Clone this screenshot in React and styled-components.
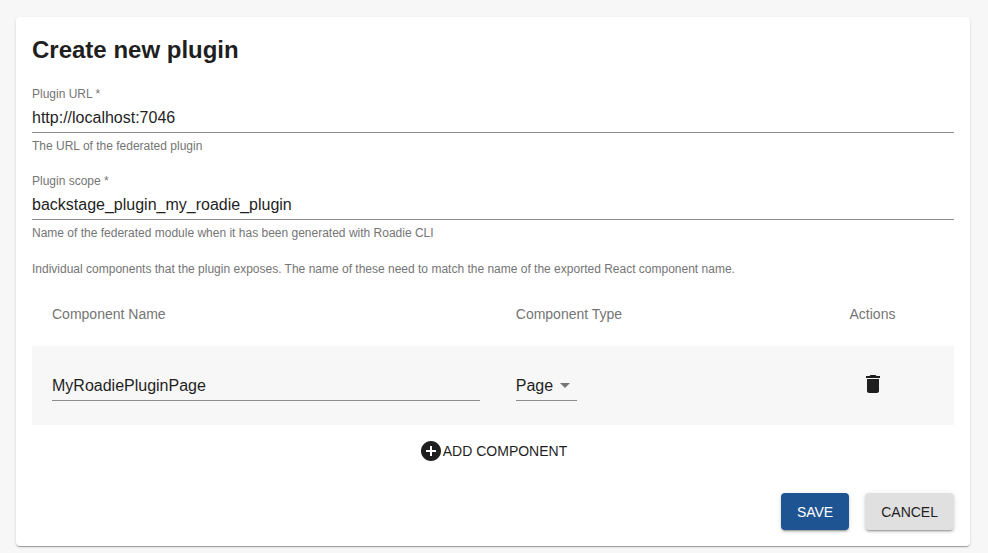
import React, { useState } from "react";
import styled, { createGlobalStyle } from "styled-components";

const PluginForm = () => {
    const [url, setUrl] = useState("http://localhost:7046");
    const [scope, setScope] = useState("backstage_plugin_my_roadie_plugin");
    const [components, setComponents] = useState([
        { id: 1, name: "MyRoadiePluginPage", type: "Page" },
    ]);

    const updateComponent = (id, values) => {
        setComponents(components.map((c) => (c.id === id ? { ...c, ...values } : c)));
    };

    const removeComponent = (id) => {
        setComponents(components.filter((c) => c.id !== id));
    };

    const addComponent = () => {
        setComponents([...components, { id: Date.now(), name: "", type: "Page" }]);
    };

    return (
        <StyledCard onSubmit={(e) => e.preventDefault()}>
            <StyledTitle>Create new plugin</StyledTitle>
            <StyledFields>
                <StyledField>
                    <StyledLabel htmlFor="plugin-url">Plugin URL *</StyledLabel>
                    <StyledInput id="plugin-url" value={url} onChange={(e) => setUrl(e.target.value)} />
                    <StyledHelper>The URL of the federated plugin</StyledHelper>
                </StyledField>
                <StyledField>
                    <StyledLabel htmlFor="plugin-scope">Plugin scope *</StyledLabel>
                    <StyledInput id="plugin-scope" value={scope} onChange={(e) => setScope(e.target.value)} />
                    <StyledHelper>Name of the federated module when it has been generated with Roadie CLI</StyledHelper>
                </StyledField>
            </StyledFields>
            <StyledDescription>
                Individual components that the plugin exposes. The name of these need to match the name of the exported React component name.
            </StyledDescription>
            <StyledTable>
                <thead>
                    <tr>
                        <StyledHeadCell $width="50.3%">Component Name</StyledHeadCell>
                        <StyledHeadCell $width="36.2%">Component Type</StyledHeadCell>
                        <StyledHeadCell $width="13.5%">Actions</StyledHeadCell>
                    </tr>
                </thead>
                <tbody>
                    {components.map((c) => (
                        <StyledRow key={c.id}>
                            <StyledCell>
                                <StyledInput
                                    aria-label="Component Name"
                                    value={c.name}
                                    onChange={(e) => updateComponent(c.id, { name: e.target.value })}
                                />
                            </StyledCell>
                            <StyledCell>
                                <StyledSelectWrapper>
                                    <StyledSelect
                                        aria-label="Component Type"
                                        value={c.type}
                                        onChange={(e) => updateComponent(c.id, { type: e.target.value })}
                                    >
                                        <option>Page</option>
                                        <option>Card</option>
                                    </StyledSelect>
                                    <StyledArrow viewBox="0 0 24 24">
                                        <path d="M7 10l5 5 5-5z" />
                                    </StyledArrow>
                                </StyledSelectWrapper>
                            </StyledCell>
                            <StyledCell>
                                <StyledIconButton type="button" aria-label="Delete" onClick={() => removeComponent(c.id)}>
                                    <StyledIcon viewBox="0 0 24 24">
                                        <path d="M6 19c0 1.1.9 2 2 2h8c1.1 0 2-.9 2-2V7H6v12zM19 4h-3.5l-1-1h-5l-1 1H5v2h14V4z" />
                                    </StyledIcon>
                                </StyledIconButton>
                            </StyledCell>
                        </StyledRow>
                    ))}
                </tbody>
            </StyledTable>
            <StyledAddButton type="button" onClick={addComponent}>
                <StyledIcon viewBox="0 0 24 24">
                    <path d="M12 2C6.48 2 2 6.48 2 12s4.48 10 10 10 10-4.48 10-10S17.52 2 12 2zm5 11h-4v4h-2v-4H7v-2h4V7h2v4h4v2z" />
                </StyledIcon>
                ADD COMPONENT
            </StyledAddButton>
            <StyledFooter>
                <StyledButton type="submit" $primary>SAVE</StyledButton>
                <StyledButton type="button">CANCEL</StyledButton>
            </StyledFooter>
        </StyledCard>
    );
};

const App = () => (
    <>
        <GlobalStyle />
        <StyledPage>
            <PluginForm />
        </StyledPage>
    </>
);

const GlobalStyle = createGlobalStyle`
  * {
    box-sizing: border-box;
  }
  body {
    margin: 0;
    background: #f7f7f7;
    color: #1f1f1f;
    font-family: "Liberation Sans", Arial, sans-serif;
  }
  input, select, button {
    margin: 0;
    color: inherit;
    font-family: inherit;
  }
`;

const StyledPage = styled.main`
  padding: 17px 18px 6px 16px;
`;

const StyledCard = styled.form`
  display: flex;
  flex-direction: column;
  padding: 16px;
  background: #fff;
  border-radius: 4px;
  box-shadow: 0 2px 1px -1px rgba(0, 0, 0, 0.2), 0 1px 1px rgba(0, 0, 0, 0.14), 0 1px 3px rgba(0, 0, 0, 0.12);
`;

const StyledTitle = styled.h1`
  margin: 0 0 19px;
  font-size: 24px;
  line-height: 34px;
`;

const StyledFields = styled.div`
  display: flex;
  flex-direction: column;
  gap: 17px;
`;

const StyledField = styled.div`
  display: flex;
  flex-direction: column;
`;

const StyledLabel = styled.label`
  color: #757575;
  font-size: 12px;
  line-height: 16px;
`;

const StyledInput = styled.input`
  display: block;
  width: 100%;
  height: 31px;
  padding: 2px 0 0;
  border: 0;
  border-bottom: 1px solid #8c8c8c;
  border-radius: 0;
  background: transparent;
  font-size: 16px;
  outline: none;
`;

const StyledHelper = styled.p`
  margin: 3px 0 0;
  color: #757575;
  font-size: 12px;
  line-height: 20px;
`;

const StyledDescription = styled(StyledHelper)`
  margin: 16px 0 3px;
`;

const StyledTable = styled.table`
  width: 100%;
  border-collapse: collapse;
  table-layout: fixed;
`;

const StyledHeadCell = styled.th`
  width: ${(props) => props.$width};
  height: 64px;
  padding: 0 16px 0 20px;
  color: #757575;
  font-size: 14px;
  font-weight: 400;
  text-align: left;
`;

const StyledRow = styled.tr`
  background: #f7f7f7;
`;

const StyledCell = styled.td`
  height: 79px;
  padding: 0 16px 0 20px;
`;

const StyledSelectWrapper = styled.div`
  display: inline-block;
  position: relative;
  vertical-align: middle;
`;

const StyledSelect = styled.select`
  display: block;
  height: 31px;
  padding: 0 23px 0 0;
  border: 0;
  border-bottom: 1px solid #8c8c8c;
  border-radius: 0;
  background: transparent;
  font-size: 16px;
  appearance: none;
  outline: none;
`;

const StyledIcon = styled.svg`
  display: block;
  width: 24px;
  height: 24px;
  fill: currentColor;
`;

const StyledArrow = styled(StyledIcon)`
  position: absolute;
  top: 3px;
  right: 0;
  color: #757575;
  pointer-events: none;
`;

const StyledIconButton = styled.button`
  padding: 12px 11px 15px;
  border: 0;
  background: transparent;
  cursor: pointer;
`;

const StyledAddButton = styled.button`
  display: flex;
  align-items: center;
  align-self: center;
  height: 36px;
  margin: 8px 0 24px;
  padding: 0;
  border: 0;
  background: transparent;
  font-size: 14px;
  cursor: pointer;
`;

const StyledFooter = styled.div`
  display: flex;
  justify-content: flex-end;
  gap: 16px;
`;

const StyledButton = styled.button`
  height: 37px;
  padding: 0 16px;
  border: 0;
  border-radius: 4px;
  background: ${(props) => (props.$primary ? "#1f5493" : "#e0e0e0")};
  color: ${(props) => (props.$primary ? "#fff" : "#1f1f1f")};
  font-size: 14px;
  box-shadow: 0 3px 1px -2px rgba(0, 0, 0, 0.2), 0 2px 2px rgba(0, 0, 0, 0.14), 0 1px 5px rgba(0, 0, 0, 0.12);
  cursor: pointer;
`;

export default App;
